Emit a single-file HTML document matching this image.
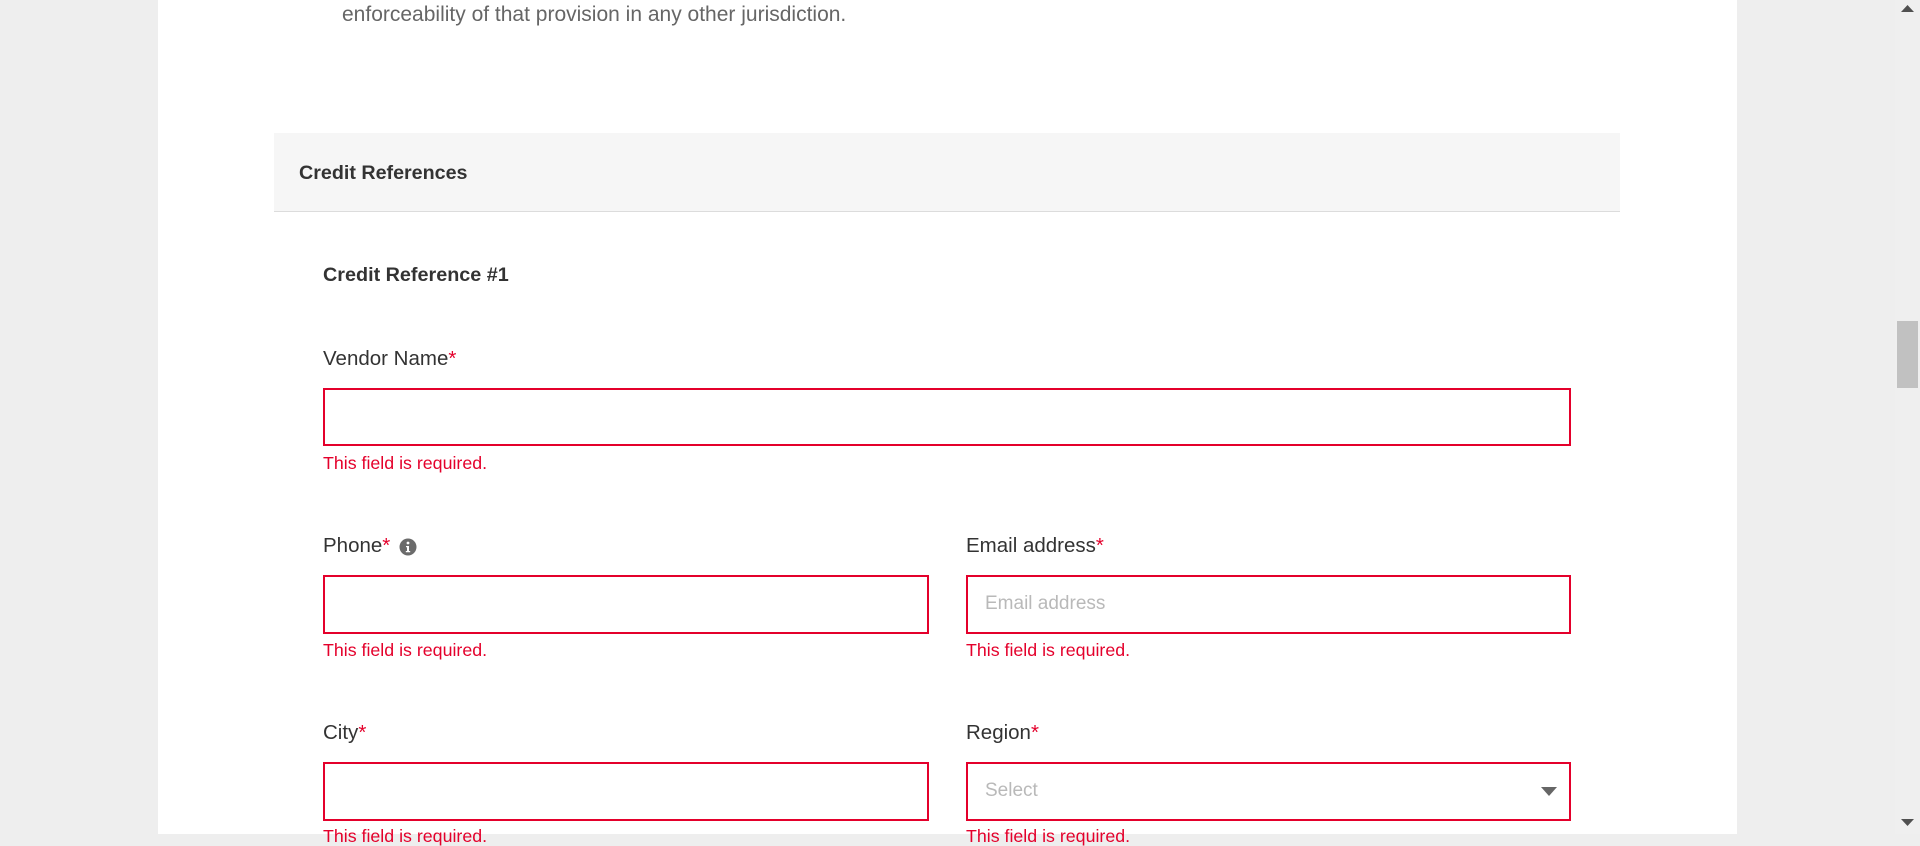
<!DOCTYPE html>
<html><head><meta charset="utf-8"><style>
*{box-sizing:border-box;margin:0;padding:0}
html,body{width:1920px;height:834px;overflow:hidden;background:#eeeeee;font-family:"Liberation Sans",Arial,sans-serif}
.page{position:absolute;left:158px;top:0;width:1579px;height:834px;background:#fff}
.abs{position:absolute;white-space:nowrap}
.lbl{font-size:20.5px;color:#333;line-height:24px}
.req{color:#e4002b}
.inp{position:absolute;border:2px solid #e4002b;background:#fff}
.err{position:absolute;font-size:17.8px;color:#e4002b;line-height:20px;white-space:nowrap}
.ph{position:absolute;font-size:19px;color:#b9b9b9;line-height:22px}
.sb{position:absolute;left:1895px;top:0;width:25px;height:834px;background:#efefef}
</style></head><body>
<div class="page"></div>
<div class="abs" style="left:342px;top:2px;font-size:21px;color:#666;line-height:26px">enforceability of that provision in any other jurisdiction.</div>
<div class="abs" style="left:274px;top:133px;width:1346px;height:79px;background:#f6f6f6;border-bottom:1px solid #dcdcdc"></div>
<div class="abs" style="left:299px;top:161px;font-size:19.7px;font-weight:bold;color:#333;line-height:24px">Credit References</div>
<div class="abs" style="left:323px;top:263px;font-size:19.8px;font-weight:bold;color:#333;line-height:24px">Credit Reference #1</div>

<div class="abs lbl" style="left:323px;top:347px">Vendor Name<span class="req">*</span></div>
<div class="inp" style="left:323px;top:388px;width:1248px;height:58px"></div>
<div class="err" style="left:323px;top:453px">This field is required.</div>

<div class="abs lbl" style="left:323px;top:534px">Phone<span class="req">*</span></div>
<svg class="abs" style="left:399px;top:538px" width="18" height="18" viewBox="0 0 18 18"><circle cx="9" cy="9" r="8.5" fill="#6b6b6b"/><circle cx="9" cy="5" r="1.4" fill="#fff"/><path d="M7 8h3v5h1.2v1.3H6.8V13H8V9.3H7z" fill="#fff"/></svg>
<div class="inp" style="left:323px;top:575px;width:606px;height:59px"></div>
<div class="err" style="left:323px;top:640px">This field is required.</div>

<div class="abs lbl" style="left:966px;top:534px">Email address<span class="req">*</span></div>
<div class="inp" style="left:966px;top:575px;width:605px;height:59px"></div>
<div class="ph" style="left:985px;top:593px">Email address</div>
<div class="err" style="left:966px;top:640px">This field is required.</div>

<div class="abs lbl" style="left:323px;top:721px">City<span class="req">*</span></div>
<div class="inp" style="left:323px;top:762px;width:606px;height:59px"></div>
<div class="err" style="left:323px;top:826px">This field is required.</div>

<div class="abs lbl" style="left:966px;top:721px">Region<span class="req">*</span></div>
<div class="inp" style="left:966px;top:762px;width:605px;height:59px"></div>
<div class="ph" style="left:985px;top:780px">Select</div>
<svg class="abs" style="left:1541px;top:787px" width="16" height="9"><path d="M0 0h16L8 9z" fill="#666"/></svg>
<div class="err" style="left:966px;top:826px">This field is required.</div>

<div class="sb"></div>
<svg class="abs" style="left:1901px;top:5px" width="13" height="7"><path d="M0 7L6.5 0 13 7z" fill="#505050"/></svg>
<div class="abs" style="left:1897px;top:321px;width:21px;height:67px;background:#c1c1c1"></div>
<svg class="abs" style="left:1901px;top:819px" width="13" height="7"><path d="M0 0h13L6.5 7z" fill="#505050"/></svg>
</body></html>
